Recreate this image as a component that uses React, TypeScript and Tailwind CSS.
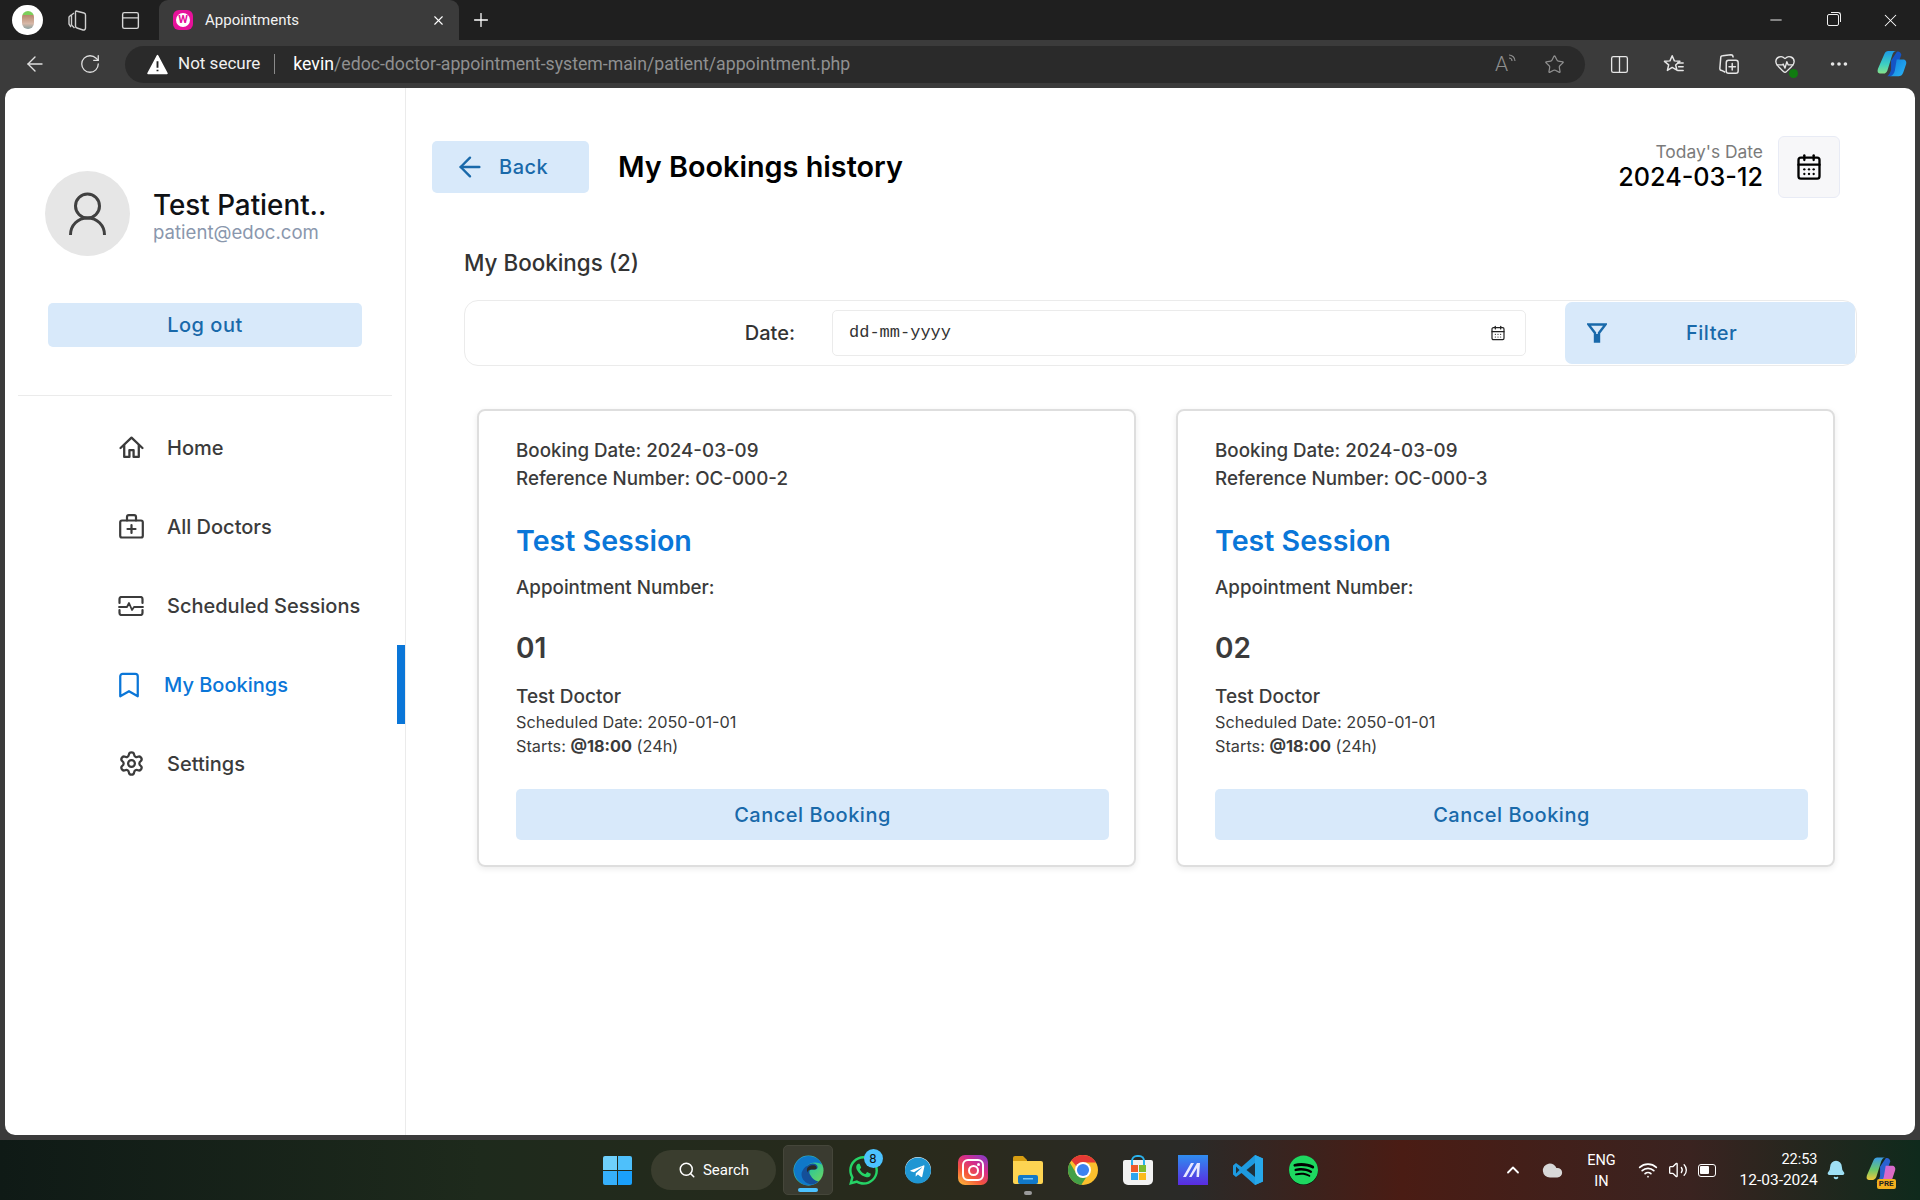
import {
  ArrowLeft,
  Bell,
  Bookmark,
  CalendarDays,
  ChevronUp,
  Cloud,
  Columns2,
  HeartPulse,
  Minus,
  MoreHorizontal,
  PanelTop,
  Plus,
  RotateCw,
  Search,
  Settings,
  Star,
  Volume2,
  Wifi,
  X,
} from "lucide-react";
import { FaSpotify, FaTelegram, FaWhatsapp } from "react-icons/fa";

const HomeIcon = () => (
  <svg viewBox="0 0 24 24" className="w-[25px] h-[25px]" fill="none" stroke="#3b3b3b" strokeWidth="2.2" strokeLinejoin="round" strokeLinecap="round">
    <path d="M1.500 12.500L12 2.500l10.500 10" />
    <path d="M5 10v11h5v-6.500h4V21h5V10" />
  </svg>
);

const DoctorsIcon = () => (
  <svg viewBox="0 0 25 25" className="w-[25px] h-[25px]" fill="none" stroke="#3b3b3b" strokeWidth="2.200" strokeLinejoin="round" strokeLinecap="round">
    <rect x="1.200" y="6.500" width="22.600" height="17" rx="1.800" />
    <path d="M8 6.500V3a1.800 1.800 0 0 1 1.800-1.800h5.400A1.800 1.800 0 0 1 17 3v3.500" />
    <path d="M12.500 11v8M8.500 15h8" />
  </svg>
);

const FilterIcon = () => (
  <svg viewBox="0 0 20 20" className="w-[20px] h-[20px]" fill="none" stroke="#1969aa" strokeWidth="2.400" strokeLinejoin="miter">
    <path d="M1.500 1.500h17L12 10v8.500H8V10z" />
    <path d="M10 11v8" strokeWidth="3.500" />
  </svg>
);

const AvatarIcon = () => (
  <svg viewBox="0 0 37 43" className="w-[37px] h-[43px]" fill="none" stroke="#404040" strokeWidth="3">
    <circle cx="18.500" cy="14" r="12" />
    <path d="M1.500 43c0-10 7.500-17 17-17s17 7 17 17" />
  </svg>
);

const WarningIcon = () => (
  <svg viewBox="0 0 20 20" className="w-[21px] h-[21px]">
    <path d="M10 1.500l9 17H1z" fill="#fff" stroke="#fff" strokeWidth="1.500" strokeLinejoin="round" />
    <path d="M10 7v6M10 15v1.500" stroke="#222" strokeWidth="1.800" />
  </svg>
);

const ReadAloudIcon = () => (
  <div className="flex items-start mr-[28px]">
    <span className="text-[21px] leading-[21px] text-[#8f8f8f] font-light">A</span>
    <svg viewBox="0 0 8 12" className="w-[8px] h-[12px]" fill="none" stroke="#8f8f8f" strokeWidth="1.100">
      <path d="M1 4a3 3 0 0 1 3 3M1 1a6 6 0 0 1 6 6" />
    </svg>
  </div>
);

const SessionsIcon = () => (
  <svg viewBox="0 0 26 20" className="w-[26px] h-[20px]" fill="none" stroke="#3b3b3b" strokeWidth="2.200" strokeLinejoin="round" strokeLinecap="round">
    <path d="M1.500 7V3a2 2 0 0 1 2-2h19a2 2 0 0 1 2 2v4" />
    <path d="M1.500 14v3a2 2 0 0 0 2 2h19a2 2 0 0 0 2-2v-3" />
    <path d="M1 11h8l2-4 3 7 2-3h9" strokeWidth="1.800" />
  </svg>
);

const CollectionsIcon = () => (
  <svg viewBox="0 0 22 24" className="w-[22px] h-[24px]" fill="none" stroke="#cfcfcf" strokeWidth="1.400">
    <path d="M9 3l8 2a2 2 0 0 1 1.500 2v13a2 2 0 0 1-2.500 2l-6-2a2 2 0 0 1-1.500-2V5A2 2 0 0 1 9 3z" />
    <path d="M7 5L4.500 7v10l3 3" />
    <path d="M4 7L2 9v7l2 3" />
  </svg>
);

const FavoritesIcon = () => (
  <svg viewBox="0 0 24 24" className="w-[22px] h-[22px]" fill="none" stroke="#e6e6e6" strokeWidth="1.600" strokeLinejoin="round">
    <path d="M10 3l2.400 5.600 6 .5-4.600 4 1.400 5.600L10 15.800 4.800 19l1.400-6-4.600-3.900 6-.5z" />
    <path d="M16 11h6M17 15h5M16 19h6" strokeLinecap="round" />
  </svg>
);

const AddCollectionIcon = () => (
  <svg viewBox="0 0 24 24" className="w-[22px] h-[22px]" fill="none" stroke="#e6e6e6" strokeWidth="1.600" strokeLinejoin="round">
    <path d="M8 21L4 19a2 2 0 0 1-2-2L3 5a2 2 0 0 1 2-2l9-1c1.500 0 2.500 1 2.500 3" />
    <rect x="9" y="8" width="13" height="14" rx="2.500" />
    <path d="M15.500 11.500v7M12 15h7" strokeLinecap="round" />
  </svg>
);

const CopilotLogo = ({ size }: { size: number }) => (
  <svg viewBox="0 0 32 28" width={size} height={size * 0.875}>
    <defs>
      <linearGradient id="cpa" x1="0" y1="0" x2="0" y2="1">
        <stop offset="0" stopColor="#1c9be8" />
        <stop offset="0.6" stopColor="#3fd0c0" />
        <stop offset="1" stopColor="#86e28a" />
      </linearGradient>
      <linearGradient id="cpb" x1="0" y1="0" x2="1" y2="1">
        <stop offset="0" stopColor="#0f7fdc" />
        <stop offset="1" stopColor="#2bb4f5" />
      </linearGradient>
    </defs>
    <path d="M8 3c1-2 2-3 4-3h9c-3 0-4 2-5 5l-5 16c-1 2-2 3-4 3H3c-2 0-3-2-2-5z" fill="url(#cpa)" />
    <path d="M15 10l6-9c2-1 4 0 5 3l-6 16c-1 4-3 7-6 7h-3c2-2 3-4 4-7z" fill="#1554c4" />
    <path d="M21 9h7c2 0 4 2 3 5l-3 9c-1 3-3 4-5 4h-9c3-1 4-3 5-6z" fill="url(#cpb)" />
  </svg>
);

const CopilotPreLogo = () => (
  <svg viewBox="0 0 32 28" className="w-[30px] h-[27px]">
    <defs>
      <linearGradient id="cppa" x1="0" y1="0" x2="0" y2="1">
        <stop offset="0" stopColor="#3a9be8" />
        <stop offset="0.55" stopColor="#6cc96a" />
        <stop offset="1" stopColor="#f0c93a" />
      </linearGradient>
      <linearGradient id="cppb" x1="0" y1="0" x2="1" y2="1">
        <stop offset="0" stopColor="#c66ae0" />
        <stop offset="1" stopColor="#e86ab0" />
      </linearGradient>
    </defs>
    <path d="M8 3c1-2 2-3 4-3h9c-3 0-4 2-5 5l-5 16c-1 2-2 3-4 3H3c-2 0-3-2-2-5z" fill="url(#cppa)" />
    <path d="M15 10l6-9c2-1 4 0 5 3l-6 16c-1 4-3 7-6 7h-3c2-2 3-4 4-7z" fill="#2a62d0" />
    <path d="M21 9h7c2 0 4 2 3 5l-3 9c-1 3-3 4-5 4h-9c3-1 4-3 5-6z" fill="url(#cppb)" />
  </svg>
);

const EdgeLogo = () => (
  <svg viewBox="0 0 32 32" className="w-[31px] h-[31px]">
    <defs>
      <linearGradient id="edgeA" x1="0" y1="0" x2="1" y2="1">
        <stop offset="0" stopColor="#2ca9e8" />
        <stop offset="0.55" stopColor="#36c98f" />
        <stop offset="1" stopColor="#7ad857" />
      </linearGradient>
    </defs>
    <circle cx="16" cy="16" r="15.500" fill="url(#edgeA)" />
    <path d="M1 15C2 7 8 1 16 1c7 0 12 4 14 9-4-3-12-3-15 1-4 5 0 13 8 16 1 .5 2 .5 3 .5C23 30 19.500 31.500 16 31.500 8 31.500 1 24 1 15z" fill="#0f78c9" />
    <path d="M15 11c3-3 8-3 10 0 1 2 0 4-3 4h-3c-2 0-3 3-1 6 2 4 5 6 8 6-2 2-5 4-9 3-6-2-9-7-8-12 1-3 3-6 6-7z" fill="#144f99" />
    <path d="M16 12c3-2 7-2 8 0 1 1 0 3-2 3h-3c-2 0-4 1-4 3-1-2-1-5 1-6z" fill="#2b2b25" />
  </svg>
);

const InstagramLogo = () => (
  <div className="w-[30px] h-[30px] rounded-[7px] bg-[linear-gradient(35deg,#fdb43a_5%,#f4553c_35%,#d42d8c_65%,#7a3ed0_100%)] flex items-center justify-center">
    <div className="w-[22px] h-[22px] rounded-[6px] border-2 border-white relative flex items-center justify-center">
      <div className="w-[11px] h-[11px] rounded-full border-2 border-white" />
      <div className="absolute top-[2px] right-[2px] w-[3px] h-[3px] rounded-full bg-white" />
    </div>
  </div>
);

const FolderLogo = () => (
  <svg viewBox="0 0 30 28" className="w-[30px] h-[28px]">
    <path d="M0 2a2 2 0 0 1 2-2h8l4 4v6H0z" fill="#d79e12" />
    <path d="M0 5h28a2 2 0 0 1 2 2v19a2 2 0 0 1-2 2H2a2 2 0 0 1-2-2z" fill="#fdd452" />
    <rect x="5" y="19" width="20" height="9" rx="2" fill="#1279c9" />
    <rect x="10" y="22" width="10" height="1.500" fill="#7cc8f5" />
  </svg>
);

const ChromeLogo = () => (
  <svg viewBox="0 0 32 32" className="w-[30px] h-[30px]">
    <circle cx="16" cy="16" r="16" fill="#fbc02d" />
    <path d="M16 0a16 16 0 0 1 13.860 8H16a8 8 0 0 0-7 4L3.500 5.500A16 16 0 0 1 16 0z" fill="#e53935" />
    <path d="M2 8.200A16 16 0 0 0 14 31.900L20 23a8 8 0 0 1-11-3z" fill="#43a047" />
    <circle cx="16" cy="16" r="8.500" fill="#fff" />
    <circle cx="16" cy="16" r="6.500" fill="#3b82f0" />
  </svg>
);

const StoreLogo = () => (
  <div className="relative w-[30px] h-[30px] flex items-end">
    <div className="absolute top-0 left-[8px] w-[14px] h-[10px] rounded-t-[6px] border-2 border-b-0 border-[#2ab4ee]" />
    <div className="w-[30px] h-[25px] rounded-b-[5px] rounded-t-[2px] bg-[#f2f2f2] grid grid-cols-2 gap-[1px] place-content-center justify-center">
      <div className="w-[7px] h-[7px] bg-[#ee5a2b] justify-self-end" />
      <div className="w-[7px] h-[7px] bg-[#7dbb2e]" />
      <div className="w-[7px] h-[7px] bg-[#2ca4ef] justify-self-end" />
      <div className="w-[7px] h-[7px] bg-[#fbbb1b]" />
    </div>
  </div>
);

const SlantLogo = () => (
  <svg viewBox="0 0 30 30" className="w-[30px] h-[30px]">
    <defs>
      <linearGradient id="slant" x1="0" y1="0" x2="0" y2="1">
        <stop offset="0" stopColor="#2f8df0" />
        <stop offset="1" stopColor="#5a2be0" />
      </linearGradient>
    </defs>
    <rect width="30" height="30" fill="url(#slant)" />
    <path d="M5 22L13 8h3L8 22zM11 22L19 8h3l-1 14h-2.500l.5-9-5.500 9z" fill="#e8e8ff" />
  </svg>
);

const VscodeLogo = () => (
  <svg viewBox="0 0 30 30" className="w-[30px] h-[30px]">
    <path d="M22 0L8.500 12 3 8 0 10.500v9L3 22l5.500-4L22 30l8-3.500v-23z" fill="#1e9ae0" />
    <path d="M22 8l-8.500 7L22 22z" fill="#1f1f1f" fillOpacity="0.85" />
    <path d="M3 11.500L6.500 15 3 18.500z" fill="#1f1f1f" fillOpacity="0.85" />
    <path d="M22 0v30l8-3.500v-23z" fill="#27a8ea" />
  </svg>
);

const navItems = [
  { label: "Home", icon: <HomeIcon /> },
  { label: "All Doctors", icon: <DoctorsIcon /> },
  { label: "Scheduled Sessions", icon: <SessionsIcon /> },
];

const bookings = [
  { ref: "OC-000-2", num: "01" },
  { ref: "OC-000-3", num: "02" },
];

const BrowserChrome = () => (
  <>
    <div className="h-10 bg-[#1f1f1f] flex items-end text-white shrink-0">
      <div className="w-[12px]" />
      <div className="w-[31px] h-[30px] mb-[5px] rounded-full bg-white flex items-center justify-center">
        <div className="w-[12px] h-[18px] rounded-full bg-[linear-gradient(180deg,#7ccf5a_25%,#b98a70_25%,#d7b8a8_70%,#88a0a0_100%)]" />
      </div>
      <div className="w-[70px] h-10 flex items-center justify-center">
        <CollectionsIcon />
      </div>
      <div className="w-[34px] h-10 flex items-center justify-center">
        <PanelTop className="w-[21px] h-[21px] text-[#d6d6d6]" strokeWidth={1.6} />
      </div>
      <div className="ml-[12px] w-[300px] h-10 bg-[#3b3b3b] rounded-t-[9px] flex items-center pl-[14px] pr-[13px]">
        <div className="w-[20px] h-[20px] rounded-[6px] bg-[#e6119a] flex items-center justify-center">
          <span className="w-[14px] h-[14px] rounded-full bg-white text-[#e6119a] text-[11px] leading-[14px] font-bold text-center font-['Roboto',sans-serif]">W</span>
        </div>
        <span className="ml-[12px] text-[15px] font-['Roboto',sans-serif] text-[#f2f2f2]">Appointments</span>
        <X className="ml-auto w-[15px] h-[15px] text-white" strokeWidth={1.8} />
      </div>
      <div className="w-[44px] h-10 flex items-center justify-center">
        <Plus className="w-[22px] h-[22px] text-white" strokeWidth={1.4} />
      </div>
      <div className="ml-auto flex h-10 items-center">
        <div className="w-[57px] flex justify-center"><Minus className="w-[18px] h-[18px]" strokeWidth={1.2} /></div>
        <div className="w-[57px] flex justify-center">
          <div className="relative w-[12px] h-[12px] rounded-[2px] border border-[#f0f0f0]">
            <div className="absolute -top-[3px] -right-[3px] w-[10px] h-[10px] rounded-tr-[3px] border-t border-r border-[#f0f0f0]" />
          </div>
        </div>
        <div className="w-[59px] flex justify-center"><X className="w-[21px] h-[21px]" strokeWidth={1.2} /></div>
      </div>
    </div>
    <div className="h-12 bg-[#3b3b3b] flex items-center text-white shrink-0">
      <div className="w-[64px] pl-[23px]"><ArrowLeft className="w-[24px] h-[24px] text-[#e0e0e0]" strokeWidth={1.4} /></div>
      <div className="w-[61px] pl-[15px]"><RotateCw className="w-[22px] h-[22px] text-[#e0e0e0]" strokeWidth={1.4} /></div>
      <div className="w-[1460px] shrink-0 h-[37px] rounded-full bg-[#2a2a2a] flex items-center pl-[22px] pr-[20px] font-['Roboto',sans-serif]">
        <WarningIcon />
        <span className="ml-[10px] text-[17px] text-[#f0f0f0]">Not secure</span>
        <span className="ml-[14px] w-px h-[20px] bg-[#8a8a8a]" />
        <span className="ml-[18px] text-[17.700px] text-white">kevin</span>
        <span className="text-[17.700px] text-[#8f9091]">/edoc-doctor-appointment-system-main/patient/appointment.php</span>
        <div className="ml-auto"><ReadAloudIcon /></div>
        <Star className="w-[21px] h-[21px] text-[#8f8f8f]" strokeWidth={1.4} />
      </div>
      <div className="w-[45px] flex justify-end"><Columns2 className="w-[21px] h-[21px] text-[#e6e6e6]" strokeWidth={1.5} /></div>
      <div className="w-[55px] flex justify-end"><FavoritesIcon /></div>
      <div className="w-[55px] flex justify-end"><AddCollectionIcon /></div>
      <div className="w-[56px] flex justify-end relative">
        <HeartPulse className="w-[22px] h-[22px] text-[#e6e6e6]" strokeWidth={1.5} />
        <span className="absolute -bottom-[3px] -right-[2px] w-[9px] h-[9px] rounded-full bg-[#107c10]" />
      </div>
      <div className="w-[54px] flex justify-end"><MoreHorizontal className="w-[22px] h-[22px] text-[#e6e6e6]" /></div>
      <div className="w-[57px] flex justify-end"><CopilotLogo size={30} /></div>
    </div>
  </>
);

const Sidebar = () => (
  <aside className="w-[401px] shrink-0 border-r border-[#ebebeb] pt-[83px]">
    <div className="flex pl-[40px]">
      <div className="w-[85px] h-[85px] rounded-full bg-[#e6e6e6] flex items-center justify-center">
        <AvatarIcon />
      </div>
      <div className="ml-[23px] mt-[18px]">
        <p className="text-[27.800px] leading-[32px] font-medium text-[#0f1115]">Test Patient..</p>
        <p className="text-[18.600px] leading-[22px] text-[#8a97ad]">patient@edoc.com</p>
      </div>
    </div>
    <button className="mt-[47px] ml-[43px] w-[314px] h-[44px] rounded-[5px] bg-[#d8e9fa] text-[#1969aa] text-[20px] font-medium tracking-[0.5px]">
      Log out
    </button>
    <div className="mt-[48px] mx-[13px] h-px bg-[#ebebeb]" />
    <nav className="mt-[12px]">
      {navItems.map((item) => (
        <div key={item.label} className="h-[79px] flex items-center text-[#3b3b3b]">
          <div className="ml-[112px] w-[28px] flex justify-center">{item.icon}</div>
          <span className="ml-[22px] text-[20px] font-medium">{item.label}</span>
        </div>
      ))}
      <div className="h-[79px] flex items-center text-[#0a76d8] border-r-[8px] border-[#0a76d8]">
        <Bookmark className="ml-[109px] w-[30px] h-[30px]" strokeWidth={1.8} />
        <span className="ml-[20px] text-[20px] font-medium">My Bookings</span>
      </div>
      <div className="h-[79px] flex items-center text-[#3b3b3b]">
        <div className="ml-[112px] w-[28px] flex justify-center"><Settings className="w-[27px] h-[27px]" strokeWidth={2} /></div>
        <span className="ml-[22px] text-[20px] font-medium">Settings</span>
      </div>
    </nav>
  </aside>
);

const BookingCard = ({ refNo, num }: { refNo: string; num: string }) => (
  <div className="w-[659px] h-[458px] rounded-[8px] border-2 border-[#dedede] shadow-[0_2px_6px_rgba(0,0,0,0.08)] pt-[26px] pl-[37px] pr-[25px] text-[#3b3b3b]">
    <p className="text-[18.750px] leading-[28px] font-medium">Booking Date: 2024-03-09</p>
    <p className="text-[18.750px] leading-[28px] font-medium">Reference Number: {refNo}</p>
    <p className="mt-[28px] text-[28.600px] leading-[40px] font-semibold text-[#0a76d8]">Test Session</p>
    <p className="mt-[14px] text-[18.800px] leading-[26px] font-medium">Appointment Number:</p>
    <p className="mt-[27px] text-[28px] leading-[40px] font-semibold">{num}</p>
    <p className="mt-[15px] text-[19px] leading-[28px] font-medium">Test Doctor</p>
    <p className="text-[16.300px] leading-[23.500px]">Scheduled Date: 2050-01-01</p>
    <p className="text-[16.300px] leading-[23.500px]">Starts: <b>@18:00</b> (24h)</p>
    <button className="mt-[31px] w-full h-[51px] rounded-[5px] bg-[#d8e9fa] text-[#1969aa] text-[20px] font-medium tracking-[0.5px]">
      Cancel Booking
    </button>
  </div>
);

const MainPanel = () => (
  <main className="flex-1 pl-[26px] pr-[58px] pt-[48px]">
    <div className="flex items-center h-[62px] mr-[17px]">
      <button className="w-[157px] h-[52px] rounded-[5px] bg-[#d8e9fa] text-[#1969aa] flex items-center pl-[22px]">
        <ArrowLeft className="w-[32px] h-[32px]" strokeWidth={1.8} />
        <span className="ml-[13px] text-[20px] font-medium tracking-[0.5px]">Back</span>
      </button>
      <h1 className="ml-[29px] text-[28.800px] font-semibold text-black">My Bookings history</h1>
      <div className="ml-auto text-right mr-[15px] mt-[-2px]">
        <p className="text-[17.400px] leading-[22px] text-[#7b7b7b]">Today's Date</p>
        <p className="text-[25.200px] leading-[29px] font-medium text-black">2024-03-12</p>
      </div>
      <div className="w-[62px] h-[62px] rounded-[6px] border border-[#e8ebf5] bg-[#f7f7f9] flex items-center justify-center">
        <CalendarDays className="w-[28px] h-[28px] text-black" strokeWidth={2} />
      </div>
    </div>
    <h2 className="mt-[50px] ml-[32px] text-[22.400px] leading-[30px] font-medium text-[#333]">My Bookings (2)</h2>
    <div className="mt-[22px] ml-[32px] h-[66px] rounded-[14px] border border-[#ebebeb] flex items-center pr-[1px]">
      <span className="w-[330px] shrink-0 text-right text-[20px] font-medium text-[#333]">Date:</span>
      <div className="ml-[37px] w-[694px] h-[46px] rounded-[5px] border border-[#ebebeb] flex items-center pl-[16px] pr-[19px]">
        <span className="font-['Liberation_Mono',monospace] text-[17px] text-[#333]">dd-mm-yyyy</span>
        <CalendarDays className="ml-auto w-[16px] h-[16px] text-[#222]" strokeWidth={1.8} />
      </div>
      <button className="ml-[39px] w-[290px] h-[62px] rounded-[7px] bg-[#d8e9fa] text-[#1969aa] flex items-center pl-[22px]">
        <FilterIcon />
        <span className="ml-[79px] text-[20px] font-medium tracking-[0.5px]">Filter</span>
      </button>
    </div>
    <div className="mt-[43px] ml-[45px] flex gap-[40px]">
      {bookings.map((b) => (
        <BookingCard key={b.ref} refNo={b.ref} num={b.num} />
      ))}
    </div>
  </main>
);

const Taskbar = () => (
  <div className="h-[60px] shrink-0 flex items-center pl-[590px] text-white font-['Roboto',sans-serif] bg-[linear-gradient(90deg,#0f1a16_0%,#1e2a1c_25%,#2a2a1c_50%,#2a2a28_62%,#4a1c14_73%,#3a2320_88%,#0f2a1c_100%)]">
    <div className="w-[55px] flex justify-center">
      <div className="grid grid-cols-2 gap-[1px] w-[29px] h-[29px]">
        <span className="bg-[#6fd0fb] rounded-tl-[2px]" />
        <span className="bg-[#4ec0fb] rounded-tr-[2px]" />
        <span className="bg-[#36b0fb] rounded-bl-[2px]" />
        <span className="bg-[#1aa0fb] rounded-br-[2px]" />
      </div>
    </div>
    <div className="ml-[6px] w-[125px] h-[40px] rounded-full bg-[#3a3d2e] flex items-center justify-center gap-[7px]">
      <Search className="w-[18px] h-[18px]" strokeWidth={2} />
      <span className="text-[15px]">Search</span>
    </div>
    <div className="ml-[7px] w-[50px] h-[50px] rounded-[5px] bg-[#3a3b30] border border-[#45463a] flex flex-col items-center justify-center relative mr-[2.500px]">
      <EdgeLogo />
      <span className="absolute bottom-[2px] w-[20px] h-[4px] rounded-full bg-[#4cc2ff]" />
    </div>
    <div className="w-[55px] flex justify-center relative">
      <FaWhatsapp className="text-[33px] text-[#25d366]" />
      <span className="absolute -top-[5px] left-[28px] w-[19px] h-[19px] rounded-full bg-[#4cc2ff] text-[#111] text-[13px] leading-[19px] text-center">8</span>
    </div>
    <div className="w-[55px] flex justify-center">
      <div className="w-[26px] h-[26px] rounded-full bg-white flex items-center justify-center">
        <FaTelegram className="text-[27px] text-[#1f96d3]" />
      </div>
    </div>
    <div className="w-[55px] flex justify-center"><InstagramLogo /></div>
    <div className="w-[55px] flex justify-center relative">
      <FolderLogo />
      <span className="absolute -bottom-[11px] w-[8px] h-[4px] rounded-full bg-[#9a9a9a]" />
    </div>
    <div className="w-[55px] flex justify-center"><ChromeLogo /></div>
    <div className="w-[55px] flex justify-center"><StoreLogo /></div>
    <div className="w-[55px] flex justify-center"><SlantLogo /></div>
    <div className="w-[55px] flex justify-center"><VscodeLogo /></div>
    <div className="w-[55px] flex justify-center">
      <div className="w-[29px] h-[29px] rounded-full bg-black flex items-center justify-center">
        <FaSpotify className="text-[30px] text-[#1ed760]" />
      </div>
    </div>
    <ChevronUp className="ml-[172px] w-[20px] h-[20px]" strokeWidth={2.2} />
    <Cloud className="ml-[19px] w-[21px] h-[21px] fill-[#d8d8d8] text-[#d8d8d8]" />
    <div className="ml-[23px] mt-[2px] w-[32px] text-center text-[14.500px] leading-[21px]">
      <p>ENG</p>
      <p>IN</p>
    </div>
    <Wifi className="ml-[20px] w-[20px] h-[20px]" strokeWidth={2} />
    <Volume2 className="ml-[10px] w-[20px] h-[20px]" strokeWidth={1.6} />
    <div className="ml-[10px] w-[18px] h-[13px] rounded-[3px] border-[1.500px] border-white p-[1.500px]">
      <div className="w-[9px] h-full bg-white rounded-[1px]" />
    </div>
    <div className="ml-[24px] w-[78px] text-right text-[14.500px] leading-[21px] whitespace-nowrap">
      <p>22:53</p>
      <p className="text-[15.500px]">12-03-2024</p>
    </div>
    <Bell className="ml-[8px] w-[20px] h-[20px] fill-[#9fe0f5] text-[#9fe0f5]" />
    <div className="ml-[20px] relative">
      <CopilotPreLogo />
      <span className="absolute -bottom-[5px] right-0 text-[8px] leading-[10px] font-bold px-[2px] rounded-[2px] bg-[#f2b01e] text-[#222]">PRE</span>
    </div>
  </div>
);

export default function App() {
  return (
    <div className="w-[1920px] h-[1200px] overflow-hidden flex flex-col bg-[#3b3b3b] font-['Inter',sans-serif]">
      <BrowserChrome />
      <div className="mx-[5px] h-[1047px] rounded-[10px] bg-white flex shrink-0 overflow-hidden">
        <Sidebar />
        <MainPanel />
      </div>
      <div className="h-[5px] shrink-0" />
      <Taskbar />
    </div>
  );
}
